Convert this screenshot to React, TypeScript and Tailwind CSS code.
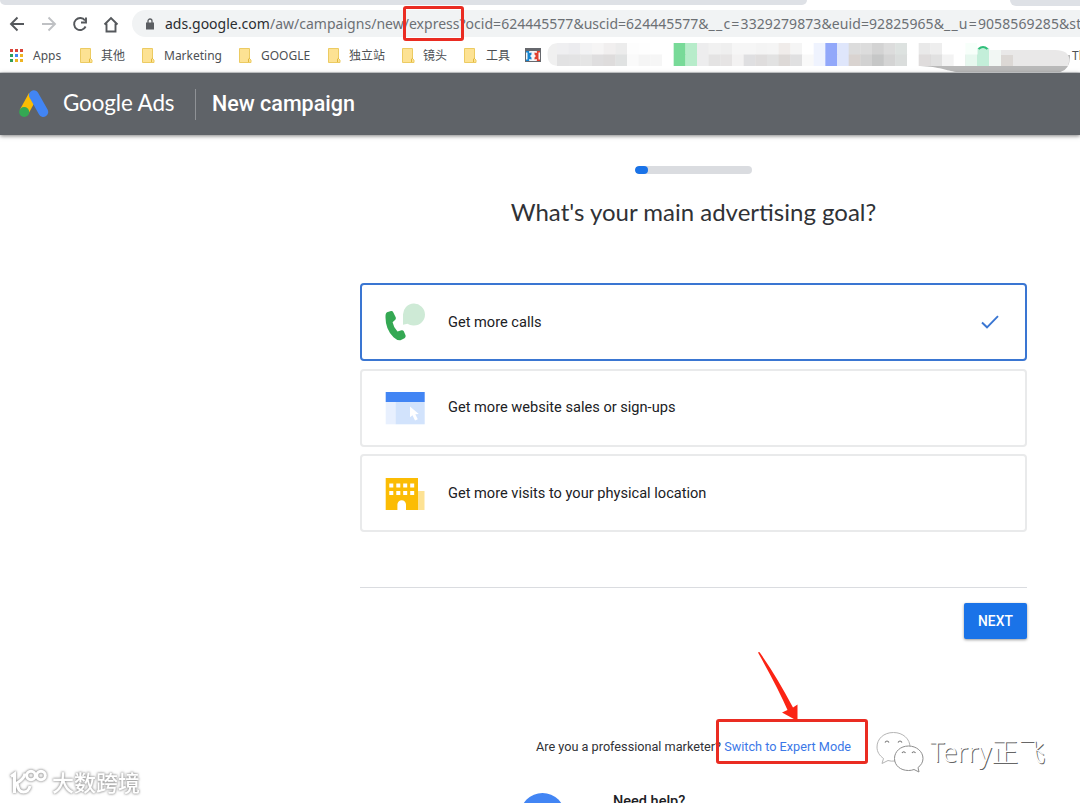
import type { ReactNode } from "react";

const MOSAIC_TOP = "#efeff1 #ececef #f3f3f4 #f6f5f5 #f1efef #ececec #fdfdfd #fefefe #ffffff #ffffff #78da98 #b7ecca #ededee #f1f1f1 #efefef #f6f6f6 #f6f6f6 #f4f4f4 #f5f5f5 #f0ecea #f5f5f5 #ffffff #eff3fe #92a8fa #dfe6fb #dcdcdc #dcdcdc #d3d3d3 #dcdcdc #dde2e0 #ffffff #e9e9e9 #eeeeee #ffffff #ffffff #f7fffa #ffffff #ffffff #ffffff #ffffff #ffffff #ffffff #ffffff #ffffff".split(" ");
const MOSAIC_BOTTOM = "#e2e2e3 #e3e3e4 #e5e5e5 #dfdedf #dedcdc #e0e2e2 #fafafa #f5f5f5 #f6f6f6 #ffffff #78da98 #b7ecca #ededee #e4e3e3 #e6e4e4 #f3f2f2 #dfdfe1 #dfdddd #e2e2e2 #ddd9d7 #e0e0e1 #f9f9f9 #eff3fe #92a8fa #dfe6fb #d9d3d0 #d2d2d2 #c6c7c7 #d4d4d4 #dadddc #ffffff #dfdcdc #e1e1e1 #f3f3f3 #ffffff #e7f8ef #c3eed9 #f2f8f5 #dcd8d5 #f0f0f0 #e8e5e5 #e6e6e6 #e8e6e4 #e3e3e3".split(" ");

function Mosaic() {
  return (
    <svg className="absolute left-[546px] top-[43px]" width="526" height="31" viewBox="546 43 526 31" shapeRendering="auto">
      <path d="M920 66C944 67 948 72 962 72.500H1055Q1069 73 1070 58V54H920Z" fill="#b9b9b9" />
      <path d="M559 43Q547.500 43 547.500 54.500T559 66Z" fill="#f0f0f0" />
      {MOSAIC_TOP.map((c, i) => (
        <rect key={i} x={557 + i * 11.667} y="43" width="12" height="12" fill={c} />
      ))}
      {MOSAIC_BOTTOM.slice(0, 43).map((c, i) => (
        <rect key={i} x={557 + i * 11.667} y="54.500" width="12" height="11.500" fill={c} />
      ))}
      <path d="M989 50H1055Q1069 50 1069.500 60L1068 66H989Z" fill="#e9e8e8" />
      <rect x="977.500" y="48" width="11.700" height="18" fill="#c3eed9" />
      <path d="M978.500 49Q983 45 987.500 49" stroke="#30bf7a" strokeWidth="2" fill="none" />
      <rect x="989" y="50" width="12" height="16" fill="#f2f7f4" />
      <rect x="1001" y="55" width="12" height="11" fill="#dcd8d5" />
    </svg>
  );
}

function Folder() {
  return (
    <svg width="13" height="15" viewBox="0 0 13 15" className="shrink-0">
      <path d="M.5.5H10.500V10.500L12 12V14.500H.5Z" fill="#fde293" stroke="#eccb62" />
      <path d="M9.500 14V11L11 10" stroke="#e2b93e" fill="none" />
    </svg>
  );
}

function Bookmark({ className, label, children }: { className: string; label?: string; children: ReactNode }) {
  return (
    <div className={`flex shrink-0 items-center ${className}`}>
      {children}
      {label && <span className="whitespace-nowrap">{label}</span>}
    </div>
  );
}

function BrowserChrome() {
  const dots = ["#d9443a", "#d9443a", "#d9443a", "#2f9e5b", "#4285f4", "#eeb422", "#2f9e5b", "#eeb422", "#eeb422"];
  return (
    <div className="relative h-[73px] overflow-hidden border-b border-[#d3d5d8] bg-white">
      <div className="flex h-[6px] justify-between">
        <div className="h-[5px] w-[807px] rounded-b-[6px] bg-[#dee1e6]" />
        <div className="h-[6px] w-[70px] rounded-bl-[6px] bg-[#dee1e6]" />
      </div>
      <div className="flex h-[35px] items-center">
        <svg width="132" height="32" viewBox="0 7 132 32" fill="none" stroke="#55585c" strokeWidth="1.900" className="shrink-0">
          <path d="M24 23H11.500M17.500 16.500L11 23L17.500 29.500" />
          <path d="M42 23H54.500M48.500 16.500L55 23L48.500 29.500" stroke="#bfc1c4" />
          <path d="M85 19.500A6 6 0 1 0 85.600 25.500M86 16.500V21.500H81" />
          <path d="M104.500 23.500L111 17L117.500 23.500M106.500 22.500V30.500H115.500V22.500" />
        </svg>
        <div className="flex h-[27px] flex-1 items-center overflow-hidden rounded-l-full bg-[#f1f3f4] pl-[14px]">
          <svg width="8" height="12" viewBox="0 0 8 12" className="mr-[11px] shrink-0">
            <path d="M0 4.500H8V11.500H0Z" fill="#5b5e62" />
            <path d="M2 5V3A2 2 0 0 1 6 3V5" stroke="#5b5e62" strokeWidth="1.300" fill="none" />
          </svg>
          <span className="pb-px whitespace-nowrap font-['Noto_Sans',sans-serif] text-[14px] tracking-[0.020px] text-[#6c7074]">
            <span className="text-[#2b2d30]">ads.google.com</span>
            /aw/campaigns/new/express?ocid=624445577&amp;uscid=624445577&amp;
            <span className="tracking-[1.200px]">__c=</span>
            <span className="tracking-[0.080px]">3329279873&amp;euid=92825965&amp;</span>
            <span className="tracking-[1.200px]">__u=</span>
            <span className="tracking-[0.100px]">9058569285&amp;st</span>
          </span>
        </div>
      </div>
      <div className="flex h-[29px] items-center pl-[10px] font-['Noto_Sans','Noto_Sans_CJK_SC',sans-serif] text-[12px] text-[#4d5054]">
        <Bookmark className="w-[70px] gap-[10px]" label="Apps">
          <svg width="13" height="13" viewBox="0 0 13 13">
            {dots.map((c, i) => (
              <rect key={i} x={(i % 3) * 5} y={Math.floor(i / 3) * 5} width="3" height="3" fill={c} />
            ))}
          </svg>
        </Bookmark>
        <Bookmark className="w-[62px] gap-[8px]" label="其他"><Folder /></Bookmark>
        <Bookmark className="w-[97px] gap-[9px]" label="Marketing"><Folder /></Bookmark>
        <Bookmark className="w-[89px] gap-[9px]" label="GOOGLE"><Folder /></Bookmark>
        <Bookmark className="w-[74px] gap-[8px]" label="独立站"><Folder /></Bookmark>
        <Bookmark className="w-[62px] gap-[8px]" label="镜头"><Folder /></Bookmark>
        <Bookmark className="w-[61px] gap-[9px]" label="工具"><Folder /></Bookmark>
        <Bookmark className="w-[547px]">
          <svg width="16" height="14" viewBox="0 0 16 14" className="-mt-[2px]">
            <rect width="16" height="14" fill="#66686d" />
            <rect x="1" y="3" width="14" height="10" fill="#f4f6f8" />
            <path d="M1 3H4.200V5L6.500 4.500V6.500L5 8L6.500 9.500V11.500L4.200 11V13H1V11.500H2.500V4.500H1Z" fill="#1685d1" />
            <path d="M15 3H11.800V5L9.500 4.500V6.500L11 8L9.500 9.500V11.500L11.800 11V13H15V11.500H13.500V4.500H15Z" fill="#e0402f" />
          </svg>
        </Bookmark>
        <span>Th</span>
      </div>
      <Mosaic />
    </div>
  );
}

function AdsHeader() {
  return (
    <header className="relative flex h-[62px] items-center bg-[#5f6368] pl-[19px] text-white shadow-[0_1px_4px_rgba(0,0,0,0.5)]">
      <svg width="30" height="28" viewBox="0 0 30 28" className="mr-[14px] shrink-0">
        <path d="M5 22L14 5.500" stroke="#fbbc04" strokeWidth="9.500" />
        <path d="M14.800 5.200L24.300 22" stroke="#4285f4" strokeWidth="9.800" strokeLinecap="round" />
        <circle cx="5.200" cy="22" r="5" fill="#34a853" />
      </svg>
      <span className="w-[132px] pb-[2px] whitespace-nowrap font-['Lato',sans-serif] text-[22.400px] tracking-[-0.100px]">Google Ads</span>
      <div className="h-[31px] w-px bg-[#8f9296]" />
      <h1 className="ml-[16px] pt-px whitespace-nowrap font-['Roboto',sans-serif] text-[21.500px] font-medium">New campaign</h1>
    </header>
  );
}

function GoalCard({ label, selected, children }: { label: string; selected?: boolean; children: ReactNode }) {
  return (
    <div className={`flex h-[78px] items-center rounded-[4px] border-2 pl-[23px] pr-[26px] ${selected ? "border-[#3a76d2]" : "border-[#e9eaeb]"}`}>
      {children}
      <span className="ml-[23px] flex-1 pt-px whitespace-nowrap font-['Roboto',sans-serif] text-[14.600px] text-[#202124]">{label}</span>
      {selected && (
        <svg width="18" height="14" viewBox="0 0 18 14" fill="none" stroke="#3a76d2" strokeWidth="1.900">
          <path d="M1 7.500L6 12.300L17 1.200" />
        </svg>
      )}
    </div>
  );
}

function PhoneIcon() {
  return (
    <svg width="40" height="38" viewBox="385 303 40 38">
      <path d="M403 324.700V315A11 11 0 1 1 414 325.600Q410 325.800 407.500 323.800Z" fill="#ceead6" />
      <path d="M387 312.200L391 311Q392.500 310.700 393.200 312.200L395.800 317.500Q396.200 319 395 320L392.600 322.300Q393.500 327.500 397.500 331.500L401.500 330.300Q403 330 403.800 331.200L405.600 335.500Q406 337.200 404.500 338.200L400.500 340.200Q397.500 340.800 393.500 337.200Q385.500 329.500 385.500 317.500Q385.300 313.200 387 312.200Z" fill="#34a853" />
    </svg>
  );
}

function BrowserIcon() {
  return (
    <svg width="40" height="33" viewBox="385 392 40 33" className="mt-[2px]">
      <rect x="385.700" y="392" width="39" height="10" fill="#4285f4" />
      <rect x="385.700" y="402" width="10" height="22.300" fill="#e8f0fe" />
      <rect x="395.600" y="402" width="29.100" height="22.300" fill="#d2e3fc" />
      <path d="M410 406.500V417.300L412.500 415.300L415 420.500L417.800 419.200L415.300 414.200L418.800 414Z" fill="#fff" />
    </svg>
  );
}

function BuildingIcon() {
  return (
    <svg width="40" height="33" viewBox="385 478 40 33" className="mt-[2px]">
      <rect x="417" y="491" width="7.500" height="19" fill="#fde293" />
      <path d="M385.700 478H418V510H406V504.500A4.300 4.300 0 0 0 397.400 504.500V510H385.700Z" fill="#fbbc04" />
      {[389.300, 396.300, 403.200, 410.200].map((x) =>
        [483.500, 491].map((y) => <rect key={`${x}-${y}`} x={x} y={y} width="4" height="4" fill="#fff" />),
      )}
    </svg>
  );
}

function Annotations() {
  return (
    <>
      <div className="absolute left-[403px] top-[6px] h-[35px] w-[61px] rounded-[3px] border-3 border-[#ea2c22]" />
      <div className="absolute left-[716px] top-[719px] h-[45px] w-[152px] rounded-[3px] border-3 border-[#ea2c22]" />
      <svg className="absolute left-[755px] top-[650px]" width="48" height="72" viewBox="755 650 48 72">
        <path d="M758 652.500Q759.500 651 760.500 653.500Q777 677 793 707.500L797.500 704.500V721L782 712.500L787.500 710Q778 688 758 652.500Z" fill="#fb2414" />
      </svg>
    </>
  );
}

function Watermarks() {
  return (
    <>
      <div className="absolute left-[874px] top-[730px] flex items-center">
        <svg width="52" height="44" viewBox="874 730 52 44" fill="#fff" stroke="#8d8d8d" strokeWidth="1">
          <path d="M893.500 732.500C883.500 732.500 877 739 877 747C877 752 879.500 755.500 883.500 758.500L882 763.500L888 760.500Q891 761.500 895 761C904 760 910 754 910 747C910 739 903 732.500 893.500 732.500Z" stroke="#b5b5b5" />
          <path d="M908.500 746C900.500 746 894.500 751.500 894.500 758.500S900.500 770.500 908.500 770.500Q911.500 770.500 914 769.500L919 772L918 767.500C921 765.500 923 762 923 758.500C923 751.500 916.500 746 908.500 746Z" />
          <path d="M885 742.500Q887 739.500 889 742.500M898 742.500Q900 739.500 902 742.500M902 753Q903.800 750.500 905.500 753M912 753Q913.800 750.500 915.500 753" fill="none" stroke="#777" strokeWidth="1.200" />
        </svg>
        <span className="ml-[4px] whitespace-nowrap font-['Noto_Sans','Noto_Sans_CJK_SC',sans-serif] text-[27px] leading-[44px] font-light text-white [text-shadow:1px_1px_0_#666]">Terry正飞</span>
      </div>
      <div className="absolute left-[8px] top-[764px] flex items-center [filter:drop-shadow(0_0_1px_#999)_drop-shadow(0_0_1px_#bbb)]">
        <svg width="42" height="34" viewBox="8 764 42 34" fill="none" stroke="#fff" strokeWidth="3" className="shrink-0">
          <path d="M11 776.500L14.500 774V793M25 773.500Q24 779 17 783Q18 792 23.500 792Q28.500 792 30 786" />
          <circle cx="31" cy="775.500" r="4.300" />
          <circle cx="41" cy="775.500" r="4.300" />
        </svg>
        <span className="ml-[2px] whitespace-nowrap font-['Noto_Sans_CJK_SC',sans-serif] text-[22px] leading-[34px] font-medium text-white">大数跨境</span>
      </div>
    </>
  );
}

export default function App() {
  return (
    <div className="relative h-[803px] w-[1080px] overflow-hidden bg-white">
      <BrowserChrome />
      <AdsHeader />
      <main className="ml-[360px] flex w-[667px] flex-col font-['Roboto',sans-serif]">
        <div className="mx-auto mt-[31px] h-[8px] w-[117px] overflow-hidden rounded-full bg-[#dadce0]">
          <div className="h-full w-[13px] rounded-full bg-[#1a73e8]" />
        </div>
        <h2 className="mt-[20px] h-[36px] text-center font-['Lato',sans-serif] text-[24px] leading-[36px] whitespace-nowrap text-[#303236]">
          What's your main advertising goal?
        </h2>
        <div className="mt-[53px] flex flex-col gap-[7.700px]">
          <GoalCard label="Get more calls" selected><PhoneIcon /></GoalCard>
          <GoalCard label="Get more website sales or sign-ups"><BrowserIcon /></GoalCard>
          <GoalCard label="Get more visits to your physical location"><BuildingIcon /></GoalCard>
        </div>
        <div className="mt-[55px] border-t border-[#dadce0]" />
        <button className="mt-[15px] h-[36px] w-[63px] self-end rounded-[2px] bg-[#1a73e8] text-[13.800px] font-medium tracking-[0.100px] text-white shadow-[0_1px_3px_rgba(0,0,0,0.4)]">
          NEXT
        </button>
        <p className="mt-[98px] ml-[176px] h-[20px] text-[12.680px] leading-[20px] whitespace-nowrap text-[#303236]">
          Are you a professional marketer? <a className="text-[#3b78e7]">Switch to Expert Mode</a>
        </p>
        <div className="mt-[36px] ml-[160px] flex">
          <div className="size-[45px] shrink-0 rounded-full bg-[#4285f4]" />
          <span className="ml-[48px] text-[14.500px] leading-[18px] font-medium text-[#202124]">Need help?</span>
        </div>
      </main>
      <Annotations />
      <Watermarks />
    </div>
  );
}
